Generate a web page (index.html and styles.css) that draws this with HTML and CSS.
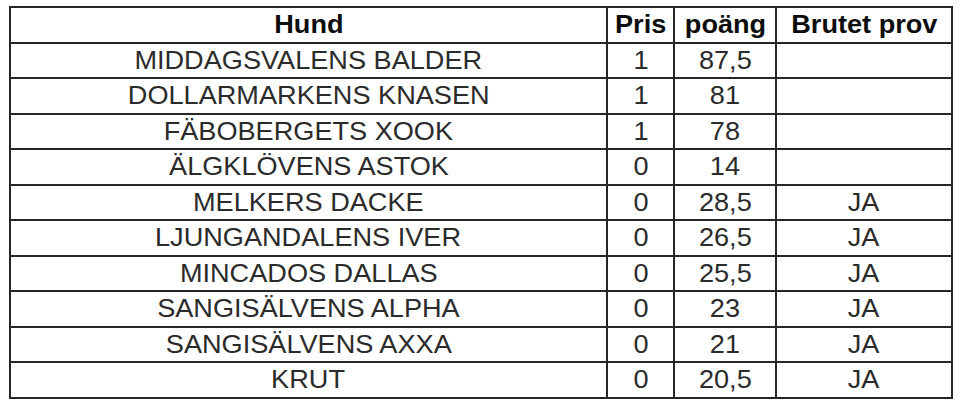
FILE: index.html
```html
<!DOCTYPE html>
<html lang="sv">
<head>
<meta charset="utf-8">
<title>Resultat</title>
<link rel="stylesheet" href="styles.css">
</head>
<body>
<table class="results">
  <colgroup>
    <col class="c-hund"><col class="c-pris"><col class="c-poang"><col class="c-brutet">
  </colgroup>
  <thead>
    <tr><th><span>Hund</span></th><th><span>Pris</span></th><th><span>poäng</span></th><th><span>Brutet prov</span></th></tr>
  </thead>
  <tbody>
    <tr><td><span>MIDDAGSVALENS BALDER</span></td><td><span>1</span></td><td><span>87,5</span></td><td></td></tr>
    <tr><td><span>DOLLARMARKENS KNASEN</span></td><td><span>1</span></td><td><span>81</span></td><td></td></tr>
    <tr><td><span>FÄBOBERGETS XOOK</span></td><td><span>1</span></td><td><span>78</span></td><td></td></tr>
    <tr><td><span>ÄLGKLÖVENS ASTOK</span></td><td><span>0</span></td><td><span>14</span></td><td></td></tr>
    <tr><td><span>MELKERS DACKE</span></td><td><span>0</span></td><td><span>28,5</span></td><td><span>JA</span></td></tr>
    <tr><td><span>LJUNGANDALENS IVER</span></td><td><span>0</span></td><td><span>26,5</span></td><td><span>JA</span></td></tr>
    <tr><td><span>MINCADOS DALLAS</span></td><td><span>0</span></td><td><span>25,5</span></td><td><span>JA</span></td></tr>
    <tr><td><span>SANGISÄLVENS ALPHA</span></td><td><span>0</span></td><td><span>23</span></td><td><span>JA</span></td></tr>
    <tr><td><span>SANGISÄLVENS AXXA</span></td><td><span>0</span></td><td><span>21</span></td><td><span>JA</span></td></tr>
    <tr><td><span>KRUT</span></td><td><span>0</span></td><td><span>20,5</span></td><td><span>JA</span></td></tr>
  </tbody>
</table>
</body>
</html>
```
FILE: styles.css
```css
html, body {
  background: #ffffff;
}
body {
  margin: 6px 0 0 9px;
  font-family: "Liberation Sans", Arial, sans-serif;
}
.results {
  border-collapse: collapse;
  table-layout: fixed;
  width: 942px;
}
.c-hund { width: 597px; }
.c-pris { width: 67px; }
.c-poang { width: 102px; }
.c-brutet { width: 176px; }
.results th,
.results td {
  border: 2px solid #262626;
  height: 35.5px;
  padding: 0;
  text-align: center;
  vertical-align: middle;
  box-sizing: border-box;
  line-height: 1;
  white-space: nowrap;
}
.results th {
  font-size: 25px;
  font-weight: bold;
  color: #0d0d0d;
}
.results td {
  font-size: 25px;
  color: #2b2b2b;
}
.results span {
  display: inline-block;
  transform: scaleX(1.085);
}
```
